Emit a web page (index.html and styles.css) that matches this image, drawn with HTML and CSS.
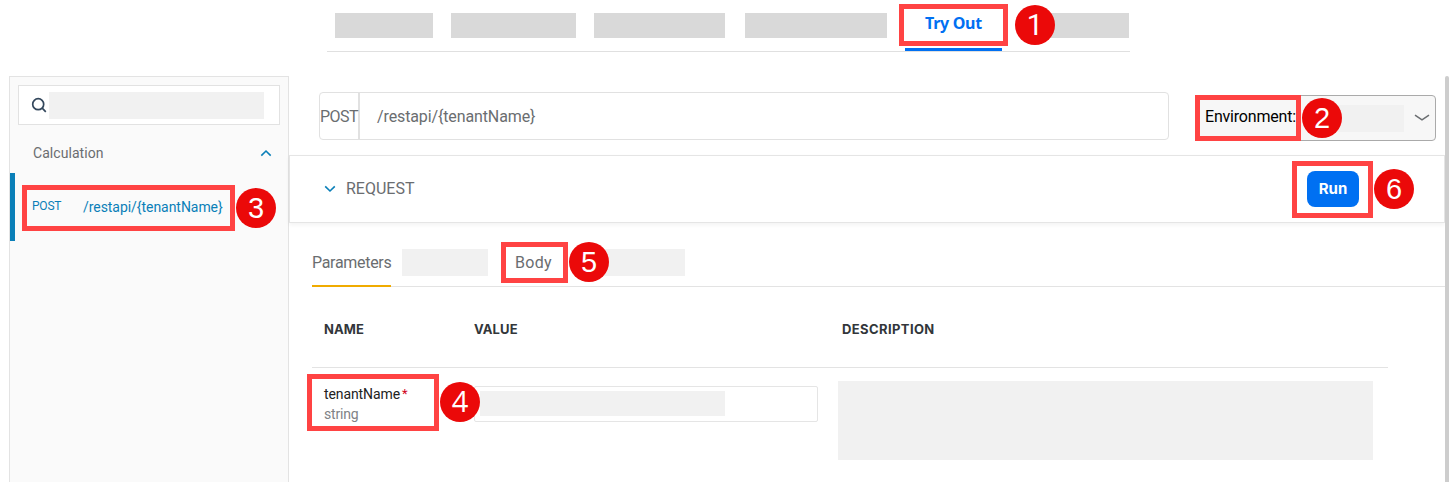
FILE: index.html
```html
<!DOCTYPE html>
<html lang="en">
<head>
<meta charset="utf-8">
<title>Try Out</title>
<link rel="stylesheet" href="styles.css">
</head>
<body>
<nav class="topnav">
  <span class="ph dark w98"></span>
  <span class="ph dark w125"></span>
  <span class="ph dark w131"></span>
  <span class="ph dark w142"></span>
  <span class="tab-active"><span class="t-try">Try Out</span></span>
  <span class="ph dark w109"></span>
</nav>
<div class="workspace">
  <aside class="sidebar">
    <div class="search">
      <svg width="16" height="16" viewBox="0 0 16 16" fill="none" stroke="#33475c" stroke-width="1.7"><circle cx="7.2" cy="7.2" r="5.5"/><path d="M11.2 11.2 14.8 14.8"/></svg>
      <span class="ph search-ph"></span>
    </div>
    <div class="group">
      <span class="t-calc">Calculation</span>
      <svg width="12" height="8" viewBox="0 0 12 8" fill="none" stroke="#0a7fb8" stroke-width="1.6"><path d="M1.3 6.6 6 2 10.7 6.6"/></svg>
    </div>
    <div class="entry">
      <span class="t-post-s">POST</span>
      <span class="t-path-s">/restapi/{tenantName}</span>
    </div>
  </aside>
  <main class="main">
    <div class="url-row">
      <div class="url-box">
        <span class="method"><span class="t-post">POST</span></span>
        <span class="t-path">/restapi/{tenantName}</span>
      </div>
      <div class="env">
        <span class="t-env">Environment:</span>
        <span class="ph env-ph"></span>
        <svg width="16" height="8" viewBox="0 0 16 8" fill="none" stroke="#6a6d70" stroke-width="1.5"><path d="M1 1.2 8 5.8 15 1.2"/></svg>
      </div>
    </div>
    <section class="request">
      <svg width="12" height="8" viewBox="0 0 12 8" fill="none" stroke="#0a7fb8" stroke-width="1.6"><path d="M1.2 1.4 6 6 10.8 1.4"/></svg>
      <span class="t-req">REQUEST</span>
      <button class="run"><span class="t-run">Run</span></button>
    </section>
    <div class="tabs">
      <span class="tab current"><span class="t-param">Parameters</span></span>
      <span class="ph w86"></span>
      <span class="tab body-tab"><span class="t-body">Body</span></span>
      <span class="ph w95"></span>
    </div>
    <div class="table">
      <div class="row head">
        <span class="t-name">NAME</span>
        <span class="t-value">VALUE</span>
        <span class="t-desc">DESCRIPTION</span>
      </div>
      <div class="row data">
        <div class="param">
          <div class="param-name"><span class="t-tenant">tenantName</span><span class="star">*</span></div>
          <div class="param-type"><span class="t-string">string</span></div>
        </div>
        <div class="value-box"><span class="ph value-ph"></span></div>
        <div class="ph desc-ph"></div>
      </div>
    </div>
  </main>
  <div class="scrollbar"></div>
</div>
<div class="frame f1"></div><div class="badge b1">1</div>
<div class="frame f2"></div><div class="badge b2">2</div>
<div class="frame f3"></div><div class="badge b3">3</div>
<div class="frame f4"></div><div class="badge b4">4</div>
<div class="frame f5"></div><div class="badge b5">5</div>
<div class="frame f6"></div><div class="badge b6">6</div>
</body>
</html>
```
FILE: styles.css
```css
* { box-sizing: border-box; }
html, body { margin: 0; height: 482px; overflow: hidden; }
body { position: relative; width: 1451px; background: #fff; color: #6a6d70; font-family: Roboto, "Noto Sans", sans-serif; font-size: 16px; line-height: 20px; }
span { white-space: nowrap; }
svg { flex: none; display: block; }
.ph { display: block; flex: none; background: #f1f1f1; height: 27px; }
.ph.dark { background: #d9d9d9; height: 25px; margin-top: 13px; }

.topnav { display: flex; align-items: flex-start; width: 803px; height: 52px; margin-left: 327px; padding-left: 8px; gap: 18px; border-bottom: 1px solid #e0e0e0; }
.w98 { width: 98px; }
.w125 { width: 125px; }
.w131 { width: 131px; margin-right: 2px; }
.w142 { width: 142px; }
.w109 { width: 109px; }
.tab-active { display: block; width: 97px; height: 51px; padding: 13px 0 0 20px; border-bottom: 3px solid #0070f2; }
.t-try { color: #0070f2; font-family: "Noto Sans", sans-serif; font-weight: 700; font-size: 16px; letter-spacing: -0.3px; }

.workspace { display: flex; height: 406px; margin-top: 24px; padding-left: 9px; }
.sidebar { width: 280px; flex: none; height: 416px; background: #fafafa; border: 1px solid #e3e3e3; }
.search { display: flex; align-items: center; width: 262px; height: 40px; margin: 8px 0 0 8px; padding-left: 12px; gap: 2px; background: #fff; border: 1px solid #e2e2e2; }
.search-ph { width: 215px; }
.group { display: flex; align-items: center; justify-content: space-between; height: 48px; padding: 8px 16px 0 23px; font-size: 14px; }
.t-calc { letter-spacing: 0.05px; }
.entry { display: flex; height: 68px; border-left: 5px solid #0a7fb8; color: #0a7fb8; padding: 24px 0 0 17px; }
.t-post-s { width: 51px; font-size: 12px; line-height: 18px; letter-spacing: -0.2px; }
.t-path-s { font-size: 14px; line-height: 20px; letter-spacing: -0.05px; }

.main { width: 1156px; flex: none; }
.url-row { display: flex; justify-content: space-between; align-items: flex-start; height: 79px; padding: 16px 9px 0 30px; }
.url-box { display: flex; align-items: center; width: 850px; height: 48px; border: 1px solid #e1e1e1; border-radius: 4px; }
.method { width: 40px; height: 46px; padding-top: 14px; border-right: 2px solid #e1e1e1; margin-right: 17px; }
.t-post { letter-spacing: -0.5px; }
.t-path { padding-top: 2px; letter-spacing: -0.12px; }
.env { display: flex; align-items: center; width: 241px; height: 46px; margin-top: 3px; padding-left: 9px; background: #f7f7f7; border: 1px solid #aaa; border-radius: 4px; color: #000; }
.t-env { width: 111px; padding-bottom: 2px; letter-spacing: -0.2px; }
.env-ph { width: 88px; margin-right: 10px; background: #f1f1f1; }
.request { display: flex; align-items: center; width: 1156px; height: 68px; padding: 0 85px 0 34px; border: 1px solid #e5e5e5; box-shadow: 0 2px 4px rgba(0,0,0,.05); }
.t-req { margin-left: 10px; }
.run { margin-left: auto; width: 52px; height: 36px; border: 0; border-radius: 8px; padding: 0; background: #0070f2; color: #fff; font: 700 15px/20px Inter, sans-serif; }
.tabs { display: flex; align-items: flex-start; height: 64px; margin-left: 23px; border-bottom: 1px solid #e3e3e3; padding-top: 26px; }
.tab { display: block; height: 38px; padding-top: 4px; }
.tab.current { width: 79px; border-bottom: 2px solid #f0ab00; margin-right: 11px; }
.t-param { letter-spacing: -0.3px; }
.t-body { letter-spacing: 0.3px; }
.body-tab { width: 85px; margin-left: 27px; }
.w86 { width: 86px; }
.w95 { width: 85px; }
.table { width: 1076px; margin-left: 23px; }
.row { display: grid; grid-template-columns: 150px 368px 1fr; padding-left: 12px; }
.head { height: 81px; padding-top: 32px; border-bottom: 1px solid #e3e3e3; color: #32363a; font-family: Inter, sans-serif; font-size: 13px; font-weight: 700; }
.t-name, .t-value { letter-spacing: 0.1px; }
.t-desc { letter-spacing: 0.4px; }
.param { padding-top: 16px; font-size: 14px; color: #222; }
.param-name { display: flex; }
.t-tenant { letter-spacing: -0.1px; }
.star { color: #d0021b; margin-left: 2px; font-size: 13px; }
.param-type { color: #808386; letter-spacing: -0.2px; }
.value-box { width: 344px; height: 36px; margin-top: 18px; border: 1px solid #e5e5e5; border-radius: 2px; padding: 4px 0 0 5px; }
.value-ph { width: 245px; height: 25px; }
.desc-ph { width: 535px; height: 79px; margin: 13px 0 0 -4px; }
.scrollbar { width: 4px; height: 416px; background: #cdcdcd; border-radius: 2px 2px 0 0; }

/* Numbered callouts laid over the interface */
.frame { position: absolute; border: 5px solid #ff4343; }
.badge { position: absolute; width: 40px; height: 40px; border-radius: 50%; background: #eb0909; color: #fff; text-align: center; font: 29px/40px "Liberation Sans", sans-serif; }
.f1 { left: 899px; top: 4px; width: 109px; height: 42px; }
.f2 { left: 1195px; top: 95px; width: 106px; height: 46px; }
.f3 { left: 22px; top: 185px; width: 213px; height: 46px; }
.f4 { left: 307px; top: 374px; width: 132px; height: 57px; }
.f5 { left: 501px; top: 242px; width: 67px; height: 41px; }
.f6 { left: 1292px; top: 161px; width: 81px; height: 57px; }
.b1 { left: 1015px; top: 5px; font-family: Roboto, sans-serif; }
.b2 { left: 1302px; top: 98px; }
.b3 { left: 236px; top: 188px; }
.b4 { left: 440px; top: 382px; font-family: "Open Sans", sans-serif; line-height: 38px; }
.b5 { left: 569px; top: 242px; }
.b6 { left: 1374px; top: 169px; }
```
